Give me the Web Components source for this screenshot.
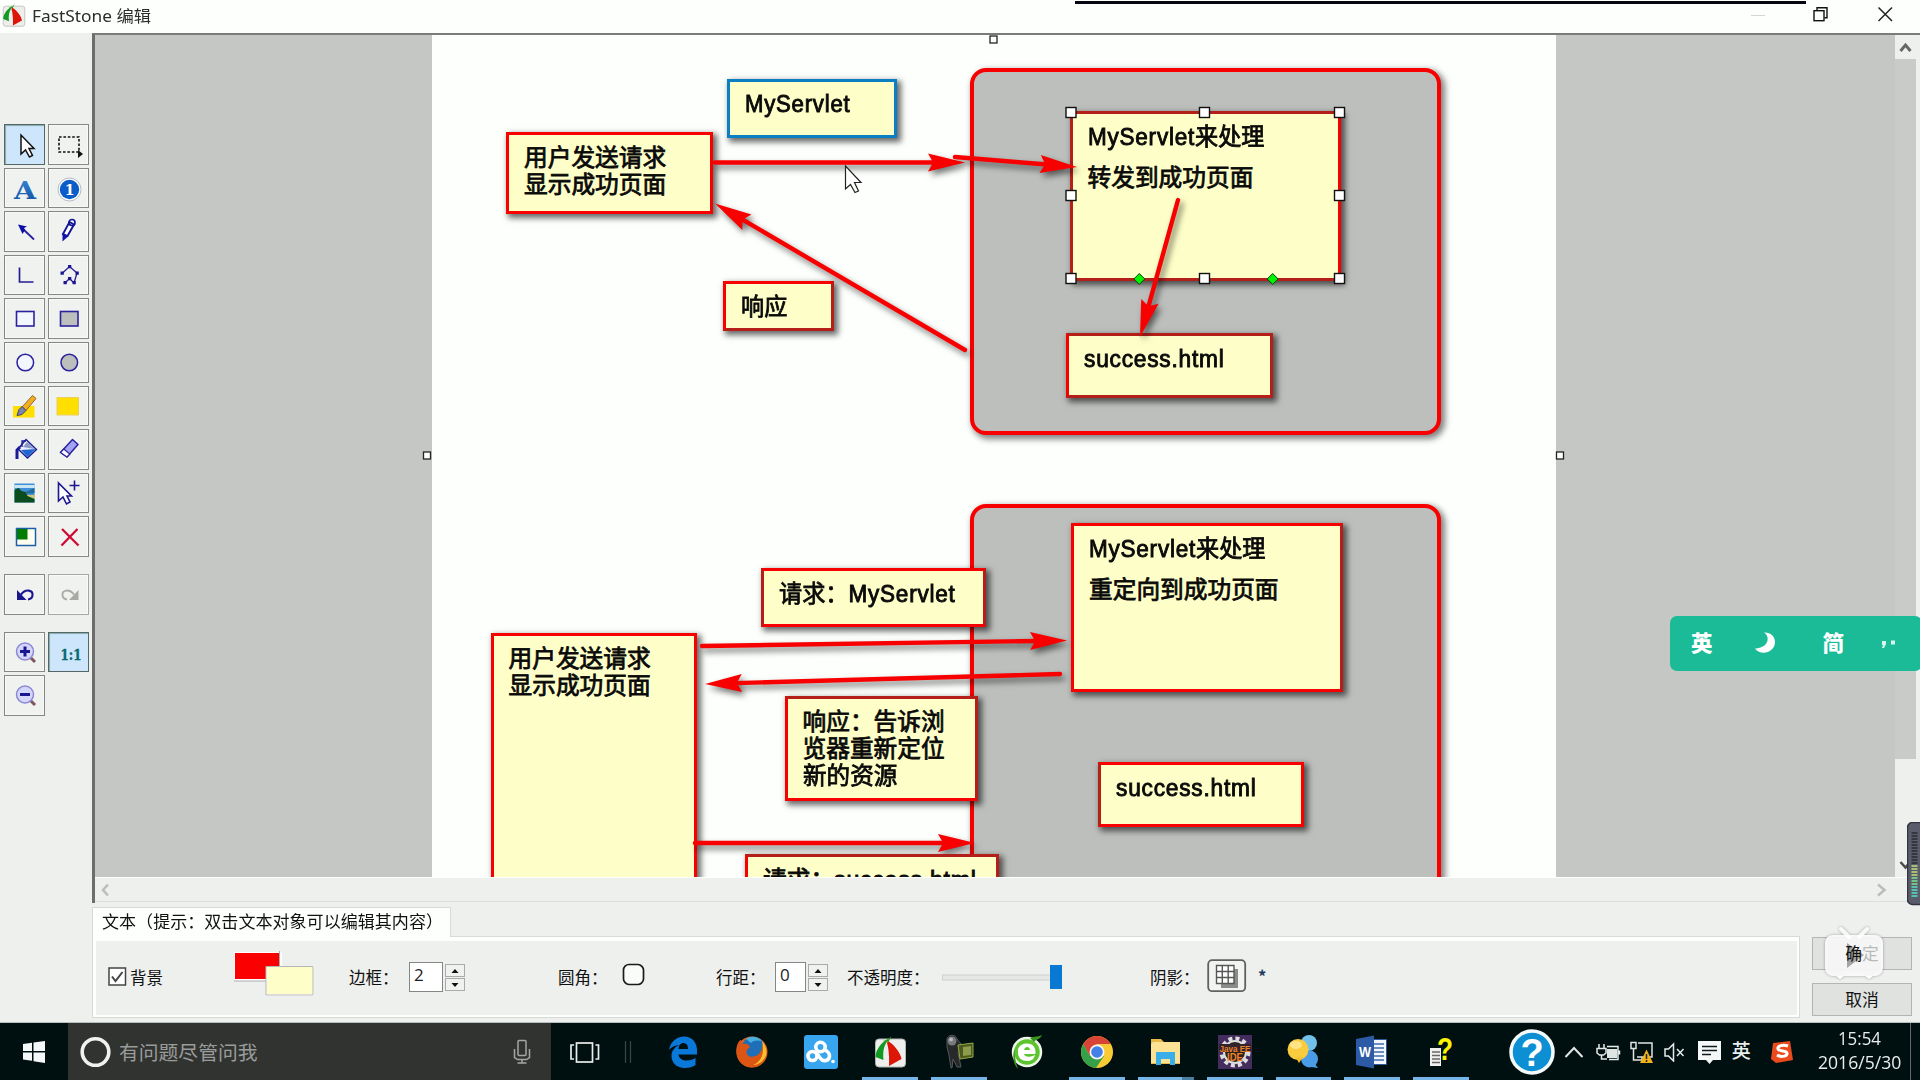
<!DOCTYPE html>
<html lang="zh-CN">
<head>
<meta charset="utf-8">
<title>FastStone 编辑</title>
<style>
html,body{margin:0;width:1920px;height:1080px;overflow:hidden;background:#eef0ee;font-family:"Liberation Sans","Noto Sans CJK SC",sans-serif;color:#111}
</style>
</head>
<body>
<app-shell></app-shell>
<script>
const define=(name,html,init)=>{
  const t=document.createElement('template');
  t.innerHTML=html;
  customElements.define(name,class extends HTMLElement{
    constructor(){super();this.attachShadow({mode:'open'}).appendChild(t.content.cloneNode(true));}
    connectedCallback(){if(init)init(this,this.shadowRoot);}
  });
};

/* Text stretched or squeezed to an exact width */
define('fit-text',`<style>:host{display:inline-block;white-space:nowrap;flex:none}span{display:inline-block;transform-origin:0 50%}</style><span><slot></slot></span>`,(el,r)=>{
  const w=+el.getAttribute('w'),s=r.querySelector('span');
  el.style.width=w+'px';
  const n=s.offsetWidth;
  if(n)s.style.transform=`scaleX(${w/n})`;
});

/* Text note on the diagram */
define('note-box',`<style>
:host{display:block;position:absolute;box-sizing:border-box;border:3px solid #f90000;background:#feffc8;box-shadow:3px 3px 6px 1px rgba(0,0,0,.6);padding-left:15px;font:400 23.7px/27px "Noto Sans CJK SC",sans-serif;-webkit-text-stroke:.8px #0a0a0a;color:#0a0a0a;white-space:nowrap}
::slotted(fit-text){display:block!important;height:var(--lh,27px);line-height:var(--lh,27px)}
</style><slot></slot>`,(el)=>{
  const [x,y,w,h,p]=el.getAttribute('box').split(',');
  Object.assign(el.style,{left:x+'px',top:y+'px',width:w+'px',height:h+'px',paddingTop:p+'px'});
  const d=el.getAttribute('dark')||'';
  for(const [k,s] of [['t','Top'],['r','Right'],['b','Bottom'],['l','Left']]) if(d.includes(k)) el.style['border'+s+'Color']='#b51f1a';
});

/* Rounded server container */
define('server-box',`<style>:host{display:block;position:absolute;box-sizing:border-box;border:4px solid #f90000;border-radius:16px;background:#bdbfbc;box-shadow:3px 3px 6px 1px rgba(0,0,0,.5)}</style>`,(el)=>{
  const [x,y,w,h]=el.getAttribute('box').split(',');
  Object.assign(el.style,{left:x+'px',top:y+'px',width:w+'px',height:h+'px'});
});

/* Arrows from a list of "x1,y1,x2,y2" segments */
define('arrow-layer',`<style>:host{display:block;position:absolute;left:0;top:0}svg{display:block;filter:drop-shadow(3px 4px 3px rgba(0,0,0,.55))}</style><svg width="1920" height="1080"></svg>`,(el,r)=>{
  r.querySelector('svg').innerHTML=el.getAttribute('lines').split(' ').map(s=>{
    const [a,b,c,d]=s.split(',').map(Number),L=Math.hypot(c-a,d-b),g=Math.atan2(d-b,c-a)*180/Math.PI;
    return `<g transform="translate(${a} ${b}) rotate(${g})" fill="#f90000"><path d="M0 0H${L-30}" stroke="#f90000" stroke-width="4.400" stroke-linecap="round"/><path d="M${L} 0L${L-37} 9L${L-33} 2V-2L${L-37} -9Z"/></g>`;
  }).join('');
});

/* Selection handles */
define('pick-handles',`<style>:host{display:block;position:absolute;left:0;top:0}</style><svg width="1920" height="900"></svg>`,(el,r)=>{
  let o='';
  for(const x of [1071,1204.5,1339.5]) for(const y of [112.5,195.5,278.5]) if(!(x===1204.5&&y===195.5)) o+=`<rect x="${x-5}" y="${y-5}" width="10" height="10" fill="#fff" stroke="#111" stroke-width="1.4"/>`;
  for(const x of [1139.3,1272.7]) o+=`<path d="M${x} 273.5l5.5 5.5-5.5 5.5-5.5-5.5z" fill="#00f400" stroke="#0a3a0a"/>`;
  for(const [x,y] of [[427,455.5],[1560,455.5],[993.5,39.5]]) o+=`<rect x="${x-3.5}" y="${y-3.5}" width="7" height="7" fill="#fff" stroke="#222" stroke-width="1.3"/>`;
  r.querySelector('svg').innerHTML=o;
});

define('tool-button',`<style>
:host{display:flex;align-items:center;justify-content:center;box-sizing:border-box;border:1.4px solid #858785;background:#f0f2f0;box-shadow:inset 0 0 0 1px #f8faf8}
:host([on]){background:#cde6fc;border-color:#566;box-shadow:inset 1px 1px 1px #8aa}
:host([off]){border-color:#a5a7a5}
::slotted(svg){display:block;margin:0 0 0 -.5px}
</style><slot></slot>`);

define('tool-bar',`<style>
:host{display:flex;flex-direction:column;box-sizing:border-box;width:92px;padding:91px 0 0 4px;background:#eef0ee}
.g{display:grid;grid-template-columns:41px 41px;grid-auto-rows:40.6px;gap:3px}
.g+.g{margin-top:17px}
</style>
<div class="g">
<tool-button on><svg width="40" height="40"><path d="M16 11v19l4.500-4 4 7 3-1.500-3.500-7H29z" fill="#fff" stroke="#111" stroke-width="1.500"/></svg></tool-button>
<tool-button><svg width="40" height="40"><rect x="10" y="13" width="20" height="15" fill="none" stroke="#111" stroke-width="1.600" stroke-dasharray="2.600 1.800"/><path d="M29 26v8l5-4z" fill="#111"/></svg></tool-button>
<tool-button><svg width="40" height="40"><defs><linearGradient id="a" x2="0" y2="1"><stop offset="0" stop-color="#3a8ad8"/><stop offset="1" stop-color="#0c4f9c"/></linearGradient></defs><text x="20" y="31" text-anchor="middle" font-family="DejaVu Serif,serif" font-weight="700" font-size="25" fill="url(#a)" textLength="22" lengthAdjust="spacingAndGlyphs">A</text></svg></tool-button>
<tool-button><svg width="40" height="40"><circle cx="20.500" cy="21.500" r="11.500" fill="#fff" stroke="#b4b8c4"/><circle cx="20.500" cy="21.500" r="9.700" fill="#0a5cc8"/><text x="20.500" y="26.500" text-anchor="middle" font-family="DejaVu Serif,serif" font-weight="700" font-size="14" fill="#fff">1</text></svg></tool-button>
<tool-button><svg width="40" height="40"><path d="M18 18L29 28.500" stroke="#2a1f9c" stroke-width="1.800"/><path d="M13 13.500l9 2-3 1.500 1 2-2.500 4z" fill="#0d0da8"/></svg></tool-button>
<tool-button><svg width="40" height="40"><path d="M14 23l6.500-12 4.500 2.500L18.500 25z" fill="#fff" stroke="#14149a" stroke-width="1.900"/><path d="M13.500 30.500v-8l5.500 3z" fill="#1212a6"/><circle cx="23" cy="11.500" r="3" fill="none" stroke="#14149a" stroke-width="1.700"/></svg></tool-button>
<tool-button><svg width="40" height="40"><path d="M14.500 12.500v14.500h14" fill="none" stroke="#241d94" stroke-width="1.700"/></svg></tool-button>
<tool-button><svg width="40" height="40"><path d="M13.500 18l7-6.500 7.500 6.500-3 10M16 28l4.500-4.500L25 28" fill="none" stroke="#241d94" stroke-width="1.300"/><g fill="#1c1690"><path d="M11.500 16.500h3.300v3.300h-3.300zM19 10h3.300v3.300H19zM26.500 16.500h3.300v3.300h-3.300zM23.500 26h3.300v3.300h-3.300zM19 22h3.300v3.300H19zM14.500 26h3.300v3.300h-3.300z"/></g></svg></tool-button>
<tool-button><svg width="40" height="40"><rect x="11.500" y="12.500" width="17.500" height="14.500" fill="#f4f6ff" stroke="#2c22a0" stroke-width="1.600"/></svg></tool-button>
<tool-button><svg width="40" height="40"><rect x="11.500" y="12.500" width="17.500" height="14.500" fill="#bdbfbd" stroke="#2c22a0" stroke-width="1.600"/></svg></tool-button>
<tool-button><svg width="40" height="40"><circle cx="20.300" cy="20.500" r="8.300" fill="#f4f6ff" stroke="#2c22a0" stroke-width="1.500"/></svg></tool-button>
<tool-button><svg width="40" height="40"><circle cx="20.300" cy="20.500" r="8.300" fill="#bdbfbd" stroke="#2c22a0" stroke-width="1.500"/></svg></tool-button>
<tool-button><svg width="40" height="40"><rect x="8" y="20" width="21.500" height="11.500" fill="#ffde00"/><path d="M27.500 9.500l3.500 3-10 12-4-3.500z" fill="#f3ae20" stroke="#94682c" stroke-width="1"/><path d="M17 20.500l4 4-4 4-5 1 2-6z" fill="#7985ab" stroke="#3c466c"/></svg></tool-button>
<tool-button><svg width="40" height="40"><rect x="8" y="11.500" width="21.500" height="17.500" fill="#ffdf00" stroke="#e8d060"/></svg></tool-button>
<tool-button><svg width="40" height="40"><path d="M21 10.500l10.500 10-9 8.500L13 20z" fill="#eef" stroke="#1a1a90" stroke-width="1.400"/><path d="M16 21l14.500-1-8 8z" fill="#1f66d0"/><path d="M18 18l4-5 7.500 7z" fill="#8a98c4"/><path d="M17 18v-6h4" fill="none" stroke="#1a1a90" stroke-width="1.300"/><path d="M12 30v-9l3-3" fill="none" stroke="#1b1b98" stroke-width="3"/></svg></tool-button>
<tool-button><svg width="40" height="40"><path d="M23.500 10.500l5.500 5-11 12.500-6.500-4.500z" fill="#a2a4f2" stroke="#2c22a0" stroke-width="1.500" stroke-linejoin="round"/><path d="M14.800 20l6 5-2.800 3-6.500-4.500z" fill="#fff" stroke="#2c22a0" stroke-width="1.200"/></svg></tool-button>
<tool-button><svg width="40" height="40"><rect x="9.500" y="10.500" width="20" height="19" fill="#3f8fd4"/><path d="M9.500 12h20v3h-20z" fill="#c8e6f4"/><path d="M16 21l13.500-6v5z" fill="#236a9a"/><path d="M19 22h10.500v4z" fill="#d6c86a"/><path d="M9.500 17l4-2 3 3 4 1 2 4 7 3v3.500h-20z" fill="#0b4c1e"/></svg></tool-button>
<tool-button><svg width="40" height="40"><path d="M9.500 10v18l4.500-4 3.500 7 3.500-2-3-6h4.500z" fill="#fff" stroke="#1c1690" stroke-width="1.600"/><path d="M25.500 7.500v10M20.500 12.500h10" stroke="#1c1690" stroke-width="1.600"/></svg></tool-button>
<tool-button><svg width="40" height="40"><rect x="11.500" y="11.500" width="19" height="17" fill="#fffff0" stroke="#1c5fa8" stroke-width="1.500"/><rect x="12" y="12" width="10.500" height="10.500" fill="#007d00"/></svg></tool-button>
<tool-button><svg width="40" height="40"><path d="M13 12l16.500 16.500M28.500 12L12.500 28.500" stroke="#d00a34" stroke-width="2.300"/></svg></tool-button>
</div>
<div class="g">
<tool-button><svg width="40" height="40"><path d="M16 20.500c5-6.500 12-4 11.500.5 0 2.500-1.500 4-4.500 4.500" fill="none" stroke="#1a1690" stroke-width="2.100"/><path d="M12 16v10h9.500z" fill="#1a1690"/></svg></tool-button>
<tool-button off><svg width="40" height="40"><path d="M25 20.500c-5-6.500-12-4-11.500.5 0 2.500 1.500 4 4.500 4.500" fill="none" stroke="#aaaca6" stroke-width="1.900"/><path d="M29.500 16v10H20z" fill="#a8aaa4"/></svg></tool-button>
</div>
<div class="g">
<tool-button><svg width="40" height="40"><path d="M25 25l5 5" stroke="#7e5660" stroke-width="3"/><circle cx="20" cy="19.500" r="8.500" fill="#d5d6fb" stroke="#8c88d4" stroke-width="1.500"/><path d="M20 14.500v10M15 19.500h10" stroke="#1a1690" stroke-width="3"/></svg></tool-button>
<tool-button on><svg width="40" height="40"><text x="11.500" y="28" font-family="DejaVu Serif,serif" font-weight="700" font-size="15.500" fill="#0a6a70" stroke="#0a6a70" stroke-width=".4" textLength="21" lengthAdjust="spacingAndGlyphs">1:1</text></svg></tool-button>
<tool-button><svg width="40" height="40"><path d="M25 25l5 5" stroke="#7e5660" stroke-width="3"/><circle cx="20" cy="19.500" r="8.500" fill="#d5d6fb" stroke="#8c88d4" stroke-width="1.500"/><path d="M15 19.500h10" stroke="#1a1690" stroke-width="3"/></svg></tool-button>
</div>`);

define('brand-icon',`<style>:host{display:block}svg{display:block;width:100%;height:100%}</style>
<svg viewBox="0 0 32 32"><rect x="1" y="3" width="30" height="28" rx="3.500" fill="#eeeeec" stroke="#b4b4b2"/><path d="M13 3C5 8 1 15 1 21l8 3C8 14 10 8 14 4z" fill="#149a22"/><path d="M13.500 5c7 4 13 13 13.500 18l-12.500 7C15 20 14 12 12.500 7z" fill="#dc1708"/><path d="M8 5l5-1 4-4-3 6z" fill="#2ca01c"/></svg>`);

define('title-bar',`<style>
:host{display:flex;position:relative;align-items:center;box-sizing:border-box;height:33px;background:#fdfffd;padding-left:2px}
brand-icon{width:24px;height:23px;margin:-2px 6px 0 0}
fit-text{font:16px/24px "Noto Sans","Noto Sans CJK SC",sans-serif;color:#2c2c2c;margin-top:-1px}
.r{margin-left:auto;display:flex;align-items:center;margin-right:27px}
.n{position:absolute;left:1075px;top:1px;width:731px;height:3px;background:#05060f}
.r svg{display:block;margin-top:-4px}
</style>
<brand-icon></brand-icon><fit-text w="119">FastStone 编辑</fit-text>
<div class="r"><svg width="143" height="17"><path d="M1 9.500h14" stroke="#d4d6d4"/><g fill="none" stroke="#111" stroke-width="1.400"><path d="M67 4.500V1.700h10v10H74.500"/><rect x="64" y="4.700" width="10" height="10"/></g><path d="M128.500 1.500L142 15M142 1.500L128.500 15" stroke="#222" stroke-width="1.500"/></svg></div>
<div class="n"></div>`);

define('diagram-canvas',`<style>
:host{display:block;position:relative;overflow:hidden;background:#c5c7c4}
.s{position:absolute;left:-95px;top:-35px;width:1920px;height:1080px}
.page{position:absolute;left:431.5px;top:0;width:1124.500px;height:1080px;background:#fdfffd}
.wide{--lh:41px}
b{font:400 23px/20px "Liberation Sans",sans-serif;-webkit-text-stroke:.9px #0a0a0a;letter-spacing:.8px}
.cur{position:absolute;left:843px;top:163px}
</style>
<div class="s"><div class="page"></div>
<server-box box="970,67.5,471,367"></server-box>
<server-box box="970,504,471,500"></server-box>
<note-box box="506,132,207,81.500,7.500"><fit-text w="142">用户发送请求</fit-text><fit-text w="142">显示成功页面</fit-text></note-box>
<note-box box="726.500,79,170,59,6.500" style="border-color:#0a7fc2"><fit-text w="105"><b>MyServlet</b></fit-text></note-box>
<note-box box="722.500,281,111,50,8" dark="rb"><fit-text w="46">响应</fit-text></note-box>
<note-box class="wide" box="1069.500,110.500,271.500,170.500,1"  dark="tlb"><fit-text w="177"><b>MyServlet</b>来处理</fit-text><fit-text w="166">转发到成功页面</fit-text></note-box>
<note-box box="1065.500,333,207,65,7.500" dark="trb"><fit-text w="141"><b>success.html</b></fit-text></note-box>
<note-box class="wide" box="1071,523,271.500,169,.5" dark="r"><fit-text w="177"><b>MyServlet</b>来处理</fit-text><fit-text w="190">重定向到成功页面</fit-text></note-box>
<note-box box="1098,762,206,64.500,7.500" dark="l"><fit-text w="141"><b>success.html</b></fit-text></note-box>
<note-box box="490.500,632.500,206.500,400,8.500"><fit-text w="142">用户发送请求</fit-text><fit-text w="142">显示成功页面</fit-text></note-box>
<arrow-layer lines="715,162.500,965,162.500 955,157,1077,167 965,350,715,203.500 1178,200,1140,337 702,646,1067,640.500 1060,674,705,684 695,843,975,843"></arrow-layer>
<note-box box="760.500,568,225,58.500,7.500" dark="lr"><fit-text w="177">请求：<b>MyServlet</b></fit-text></note-box>
<note-box box="784.500,696,193,105,7.500" dark="tr"><fit-text w="142">响应：告诉浏</fit-text><fit-text w="142">览器重新定位</fit-text><fit-text w="94.500">新的资源</fit-text></note-box>
<note-box box="745,854,254,70,8" dark="tr"><fit-text w="214">请求：<b>success.html</b></fit-text></note-box>
<pick-handles></pick-handles>
<svg class="cur" width="22" height="32"><path d="M2.500 3v23l5-4.500 4.500 8 3.500-1.500-4-8.500h6.500z" fill="#fff" stroke="#222" stroke-width="1.200"/></svg>
</div>`);

define('edit-area',`<style>
:host{display:grid;grid-template-columns:1800px 1fr;grid-template-rows:842px 25px;box-sizing:border-box;width:1828px;height:870px;border-left:3px solid #6c6e6c;border-top:2.500px solid #7a7c7a}
.v{display:flex;flex-direction:column;align-items:center;background:#eef0ee;padding-right:4px}
.v i{width:21px;height:700px;background:#c9cbc9}
.v svg{display:block}
.h{grid-column:1/3;display:flex;justify-content:space-between;align-items:center;background:#eef0ee;border-top:1px solid #fdfffd;border-bottom:1px solid #dcdedc;padding:0 32px 0 4px}
</style>
<diagram-canvas></diagram-canvas>
<div class="v"><svg width="21" height="24"><path d="M5.500 16l5-6 5 6" fill="none" stroke="#666866" stroke-width="3"/></svg><i></i><svg width="21" height="118"><path d="M5.500 103l5 5.500 5-6" fill="none" stroke="#4a4c4a" stroke-width="2.500"/></svg></div>
<div class="h"><svg width="14" height="14"><path d="M9 1.500L4 7l5 5.500" fill="none" stroke="#bbbdbb" stroke-width="2.500"/></svg><svg width="14" height="14"><path d="M4 1.500L10.500 7 4 12.500" fill="none" stroke="#bbbdbb" stroke-width="2.500"/></svg></div>`);

define('num-spinner',`<style>
:host{display:flex;gap:2px;align-items:center}
.i{box-sizing:border-box;width:var(--w,34px);height:30px;border:1.5px solid #858785;background:#fff;font:17px/24px "Open Sans",sans-serif;padding-left:4px;color:#222}
.b{display:flex;flex-direction:column;gap:1px}
svg{display:block;box-sizing:border-box;border:1px solid #a9aba9;background:#f0f2f0}
</style><div class="i"><slot></slot></div><div class="b"><svg width="20" height="13"><path d="M5.500 8L9 4l3.500 4z" fill="#111"/></svg><svg width="20" height="13"><path d="M5.500 4L9 8l3.500-4z" fill="#111"/></svg></div>`);

define('text-options',`<style>
:host{display:flex;flex-direction:column;width:1708px;font:16.500px/22px "Noto Sans CJK SC",sans-serif;color:#111}
.tab{box-sizing:border-box;align-self:flex-start;width:359px;height:30px;background:#fdfffd;border:1px solid #d8dad8;border-bottom:0;padding:2px 0 0 9px;margin-bottom:-1px;z-index:1}
.p{box-sizing:border-box;height:81.500px;border:1px solid #d8dad8;box-shadow:inset 0 4px #fdfffd,inset 3px 0 #fdfffd,inset 0 -2px #fdfffd,inset -2px 0 #fdfffd;display:flex;align-items:center;padding:1px 0 0 15px}
.p>*{flex:none}
svg{display:block}
</style>
<div class="tab"><fit-text w="341">文本（提示：双击文本对象可以编辑其内容）</fit-text></div>
<div class="p">
<svg width="22" height="20"><rect x="1" y="1" width="16.500" height="17" fill="#fff" stroke="#444" stroke-width="1.500"/><path d="M4 9.500l3.500 4.500 7-9" fill="none" stroke="#444" stroke-width="2"/></svg>
<fit-text w="33">背景</fit-text>
<svg width="82" height="46" style="margin:-8px 0 0 70px"><path d="M1 2h48v29H1z" fill="#fff"/><path d="M2 3h44v26H2z" fill="#fa0000"/><path d="M46.500 1v30H1" fill="none" stroke="#aaa"/><path d="M33 16h48v30H33z" fill="#fff"/><path d="M34 17h46v27H34z" fill="#feffc8"/><path d="M33 45V16.500h47V45z" fill="none" stroke="#b5b7b5"/></svg>
<fit-text w="50" style="margin-left:34px">边框：</fit-text>
<num-spinner style="margin-left:10px">2</num-spinner>
<fit-text w="50" style="margin-left:93px">圆角：</fit-text>
<svg width="25" height="25" style="margin:-3px 0 0 13px"><path d="M8 1.500h9c3 0 5.500 3 5.500 5.500v9c0 3-3 5.500-5.500 5.500H8c-3 0-5.500-3-5.500-5.500V7C2.500 4 5 1.500 8 1.500z" fill="#fafcfa" stroke="#1a1a1a" stroke-width="1.700"/></svg>
<fit-text w="50" style="margin-left:70px">行距：</fit-text>
<num-spinner style="margin-left:9px;--w:31px">0</num-spinner>
<fit-text w="83" style="margin-left:19px">不透明度：</fit-text>
<svg width="122" height="26" style="margin-left:12px"><rect x=".5" y="11" width="118" height="5" fill="#e6e8e6" stroke="#cfd1cf"/><rect x="108" y="1" width="12" height="24" fill="#0878d2"/></svg>
<fit-text w="50" style="margin-left:86px">阴影：</fit-text>
<svg width="40" height="34" style="margin:-2px 0 0 7px"><rect x="1.200" y="1.200" width="37" height="31" rx="4" fill="#f2f4f2" stroke="#5f615f" stroke-width="1.800"/><path d="M14 10h17v19H14z" fill="#8a8c8a"/><path d="M9.500 6.500h17.500v18H9.500zM15.300 6.500v18M21.200 6.500v18M9.500 12.500h17.500M9.500 18.500h17.500" fill="#fff" stroke="#555755" stroke-width="1.400"/></svg>
<fit-text w="8" style="margin:-2px 0 0 11px;font-weight:700;color:#1d3a5c">*</fit-text>
</div>`);

define('push-button',`<style>:host{display:flex;align-items:center;justify-content:center;box-sizing:border-box;width:100px;height:32.500px;border:1.500px solid #b3b5b3;background:#e0e2e0;font:16.800px/22px "Noto Sans CJK SC",sans-serif;color:#111;position:relative}.t{position:relative;z-index:1}</style><slot name="badge"></slot><span class="t"><slot></slot></span>`);

define('tv-badge',`<style>:host{display:block;position:absolute;left:10px;top:-13px}svg{display:block;filter:drop-shadow(0 0 1.500px rgba(0,0,0,.35))}</style>
<svg width="62" height="54"><g fill="#fff" fill-opacity=".9"><rect x="2" y="10" width="58" height="41" rx="8"/></g><path d="M18 4l8 8M44 4l-8 8" stroke="#fff" stroke-opacity=".9" stroke-width="4" stroke-linecap="round"/><path d="M13 51h8l-4 3zM42 51h8l-4 3z" fill="#fff"/><path d="M24 18l17 12-17 13z" fill="#8e908e" fill-opacity=".8"/></svg>`);

define('ime-bar',`<style>:host{display:flex;align-items:center;box-sizing:border-box;position:absolute;left:1670px;top:616px;width:252px;height:55px;border-radius:7px;background:#1bbb98;color:#fff;font:900 21.500px/30px "Noto Sans CJK SC",sans-serif;padding:0 0 4px 21px}svg{display:block}</style>
<span>英</span><svg width="24" height="24" style="margin-left:41px"><path d="M10 2.500C17 7 14 18 1 18.500c6 8 20 4 20-6.500C21 6 16 2 10 2.500z" fill="#fff"/></svg><span style="margin-left:45px">简</span><svg width="20" height="20" style="margin-left:34px"><path d="M4 9h4v3l-2 4H4l1-3H4zM13 8.500h4v4h-4z" fill="#d8f6ec"/></svg>`);

define('level-meter',`<style>:host{display:block;position:absolute;left:1907px;top:822px}</style><svg width="14" height="84"></svg>`,(el,r)=>{
  let o='<rect x=".5" y=".5" width="20" height="82" rx="5" fill="#5b5c6b" stroke="#33343e" stroke-width="1.500"/>';
  for(let i=0;i<22;i++) o+=`<rect x="4.500" y="${10+i*3}" width="6" height="2" fill="${i<11?'#353642':i<15?'#a7bd74':i<18?'#74c284':'#56c2ac'}"/>`;
  r.querySelector('svg').innerHTML=o;
});

define('task-item',`<style>
:host{display:flex;position:relative;flex:none;box-sizing:border-box;width:68.900px;height:57px;align-items:center;justify-content:center}
:host([run])::after{content:"";position:absolute;left:6.500px;right:6.500px;bottom:0;height:3px;background:#76b5e8}
:host([multi])::after{background:linear-gradient(90deg,#76b5e8 78%,#4c7da4 78%)}
</style><slot></slot>`);

define('task-bar',`<style>
:host{display:flex;position:relative;height:57px;background:#001011;color:#e8eeec;align-items:center}
:host>*{flex:none}
svg{display:block}
.start{width:68px;display:flex;justify-content:center}
.search{box-sizing:border-box;width:483px;height:57px;background:#313331;display:flex;align-items:center;padding-left:11px;color:#9a9c9a;font:19.800px/28px "Noto Sans CJK SC",sans-serif}
.apps{display:flex}
.tray{display:flex;align-items:center;margin-left:32px;font:19px/24px "Noto Sans CJK SC",sans-serif}
.clock{display:flex;flex-direction:column;align-items:center;font:18px/24px "Open Sans",sans-serif;margin-left:24px;width:84px}
.end{width:1px;height:57px;background:#667;margin-left:8px}
brand-icon{width:33px;height:32px}
</style>
<div class="start"><svg width="24" height="24"><path d="M1 4l9-1.300V11H1zM11.500 2.500L23 1v10H11.500zM1 12.500h9v8.300L1 19.500zM11.500 12.500H23V23l-11.500-1.700z" fill="#f4f8f8"/></svg></div>
<div class="search"><svg width="34" height="34"><circle cx="16.500" cy="17" r="13.300" fill="none" stroke="#f0f2f0" stroke-width="3.600"/></svg><fit-text w="138" style="margin-left:6px">有问题尽管问我</fit-text><svg width="18" height="26" style="margin-left:256px"><rect x="5" y="1.500" width="8" height="15" rx="1" fill="none" stroke="#a4a6a4" stroke-width="1.500"/><path d="M1.500 10v8.500l3 2h9l3-2V10M9 20.500v3M4.500 24h9" fill="none" stroke="#a4a6a4" stroke-width="1.500"/></svg></div>
<svg width="98" height="32"><g fill="none" stroke="#e8eeec" stroke-width="1.700"><rect x="25.500" y="7" width="16" height="19"/><path d="M23 9h-3v14h3M44.500 9h3v14h-3"/></g><path d="M74.500 5v22M79.500 5v22" stroke="#3a4646" stroke-width="1.200"/></svg>
<div class="apps">
<task-item><svg width="32" height="34"><path d="M2 15C4 4 13 1 18 1.500c8 .5 12 7 12 14v4H11.500c.5 4 4 6 8.500 6 3.500 0 6-1 8.500-2.500v7C26 32 22 33 18 33 9.500 33 4.500 27.500 4.500 21c0-5 3-9 8-11-6 .5-9 3-10.500 5zm9.500-1H21c0-4-1.500-6-4.500-6s-4.700 2.500-5 6z" fill="#0a78d8"/></svg></task-item>
<task-item><svg width="34" height="34"><circle cx="17" cy="17" r="15.500" fill="#e8661a"/><circle cx="18" cy="13.500" r="11.500" fill="#1e6fb8"/><path d="M11 4c5-4 13-2 16 2-4-1-9-1-11 2z" fill="#48b0e0"/><path d="M3 8c1-2 2-3 3-3l2 4c4-1 6 1 7 3l-3 3c-2 5 3 8 8 6 5-1 7-6 7-11 5 5 6 12 1 17-6 7-16 7-22 1C1 23 0 14 3 8z" fill="#dc5514"/><path d="M27 6c5 6 6 13 2 18-3 4-7 6-11 6 8-3 12-11 9-24z" fill="#f8c02c"/></svg></task-item>
<task-item><svg width="34" height="34"><rect width="34" height="34" rx="3" fill="#38a6ee"/><g fill="none" stroke="#fff" stroke-width="3.600"><circle cx="16.500" cy="12" r="4.700"/><circle cx="8.500" cy="21" r="4.500"/><path d="M20 14.500c0 0 5.500 2 5.500 6.500 0 5-6.500 6-9 2.500L12.500 18"/></g><circle cx="29" cy="26.500" r="1.800" fill="#fff"/></svg></task-item>
<task-item run><brand-icon></brand-icon></task-item>
<task-item run><svg width="32" height="36"><path d="M4 5c1-5 9-5 10 0l4 5-1 5-2 4 3 14h-4l-4-8-1 9H8L6 21 4 13z" fill="#26282a" stroke="#55585a"/><circle cx="9" cy="7" r="4.500" fill="#77797c"/><circle cx="8" cy="5.500" r="2" fill="#b5b7ba"/><path d="M15 11l15-2v14l-13 2z" fill="#4c591e" stroke="#93a845"/><path d="M20 13l8-1v9l-8 1z" fill="#8c9c4c"/></svg></task-item>
<task-item><svg width="36" height="36"><circle cx="17" cy="18" r="14" fill="#5cc42e" stroke="#eef6ea" stroke-width="2.500"/><path d="M8 19C7 12 12 9.500 17 9.500c6 0 9 4 8.500 10.500H14c1 3.500 6 3.500 11 1-1 4.500-4 6-8 6-5 0-9-3-9-8zm6-3h6c-.5-4-5-4-6 0z" fill="#fff"/><path d="M20 4c5-2 9-1 12-3-2 5-6 4-8 7M5 14c-1 7 1 15 3 21-5-5-6-14-3-21z" fill="#38961a"/></svg></task-item>
<task-item run><svg width="34" height="34" viewBox="-17 -17 34 34"><circle r="16" fill="#f8cb35"/><path d="M-13.800-8A16 16 0 0 1 13.800-8H0L-7 4z" fill="#d94436"/><path d="M-13.800-8A16 16 0 0 0-1 16L7 4H-7z" fill="#35a048"/><circle r="7.500" fill="#f4f6f4"/><circle r="5.800" fill="#4381e6"/></svg></task-item>
<task-item run multi><svg width="34" height="34"><path d="M2 4h10l3 3h16v22H2z" fill="#e8b94a"/><path d="M4 7h27v21H2V9z" fill="#fbe294"/><path d="M7 17h19v13h-5v-6h-9v6H7z" fill="#39aee8"/></svg></task-item>
<task-item run><svg width="34" height="34"><rect width="34" height="34" fill="#452c5e"/><circle cx="17" cy="17" r="13.500" fill="none" stroke="#ddd" stroke-width="4" stroke-dasharray="4 3.070"/><circle cx="17" cy="17" r="11" fill="#28231f" stroke="#ddd" stroke-width="2"/><path d="M1 9h32v8H1z" fill="#33242b"/><text x="1.500" y="16.500" font-family="Liberation Sans" font-weight="700" font-size="9.500" fill="#ef8128" textLength="31" lengthAdjust="spacingAndGlyphs">Java EE</text><text x="9" y="25.500" font-family="Liberation Sans" font-weight="700" font-size="10" fill="#ef8128" textLength="16" lengthAdjust="spacingAndGlyphs">IDE</text></svg></task-item>
<task-item run><svg width="36" height="34"><circle cx="24" cy="8" r="8" fill="#71c1ea"/><circle cx="24.500" cy="24" r="8.500" fill="#4b9ce6"/><path d="M30 29l3 4-7-1z" fill="#4b9ce6"/><circle cx="13" cy="14.500" r="10.500" fill="#f9cc3d"/><path d="M11 23l3 5 4-6z" fill="#f3bd2c"/><ellipse cx="11" cy="10" rx="6" ry="4" fill="#ffe385"/></svg></task-item>
<task-item run><svg width="34" height="34"><path d="M16 4.500h15.500v25H16z" fill="#f4f8fc" stroke="#2b579a"/><path d="M19 9h10M19 13h10M19 17h10M19 21h10M19 25h10" stroke="#3c6ab0" stroke-width="1.600"/><path d="M1 4l18-3.500v33L1 30z" fill="#2c5aa4"/><text x="4" y="22" font-family="Liberation Sans" font-weight="700" font-size="14" fill="#fff" textLength="12" lengthAdjust="spacingAndGlyphs">W</text></svg></task-item>
<task-item run><svg width="26" height="34"><path d="M2 13h11v18H2z" fill="#f0f0ee"/><path d="M4 17h8M4 20.500h8M4 24h8M4 27.500h8" stroke="#666" stroke-width="1.400"/><text x="9" y="25" font-family="Liberation Sans" font-weight="700" font-size="32" fill="#fdf400" textLength="16" lengthAdjust="spacingAndGlyphs">?</text></svg></task-item>
</div>
<div class="tray">
<svg width="48" height="48"><circle cx="24" cy="24" r="21" fill="#0d8fd4" stroke="#f4fafa" stroke-width="3.500"/><text x="24" y="37.500" text-anchor="middle" font-family="Liberation Sans" font-weight="700" font-size="38" fill="#fff">?</text></svg>
<svg width="20" height="16" style="margin-left:8px"><path d="M1.500 13L10 4l8.500 9" fill="none" stroke="#e0e6e4" stroke-width="2"/></svg>
<svg width="26" height="22" style="margin-left:11px"><path d="M4 3v4M9 3v4M2 7.500h9V12l-2.500 2h-4L2 12zM6.500 14v4H12" fill="none" stroke="#e4eae8" stroke-width="1.500"/><rect x="12" y="8" width="10" height="9" fill="#dfe5e3"/><path d="M12 5.500h11v13h-9M24.500 9.500v4" fill="none" stroke="#e4eae8" stroke-width="1.500"/></svg>
<svg width="26" height="24" style="margin-left:8px"><path d="M2 2.500h5v6H2zM9 3h14v14H8M4.500 9v11h8M13 17v4" fill="none" stroke="#dfe5e3" stroke-width="1.500"/><path d="M17.500 9.500L24 23H11z" fill="#f3b21c"/><path d="M17.500 14v5M17.500 20v2" stroke="#222" stroke-width="1.500"/></svg>
<svg width="24" height="20" style="margin-left:8px"><path d="M2 7h3.500l5-5v17l-5-5H2zM14 7l6.500 7M20.500 7L14 14" fill="none" stroke="#e4eae8" stroke-width="1.500"/></svg>
<svg width="26" height="26" style="margin-left:9px"><path d="M2 2h23v19h-8l-3.500 4-3.500-4H2z" fill="#f4f8f8"/><path d="M6 7.500h15M6 11.500h15M6 15.500h9" stroke="#0c1a1a" stroke-width="1.500"/></svg>
<span style="margin:-3px 0 0 10px;font-weight:500">英</span>
<svg width="24" height="26" style="margin-left:19px"><path d="M3 4l17-2 3 19-17 3-5-4z" fill="#ea4a1c"/><path d="M18 7c-5-2-11 0-10 3 1 3 10 1 9 5-1 3-7 3-10 1" fill="none" stroke="#fff" stroke-width="3"/></svg>
</div>
<div class="clock" style="margin-top:-4px"><fit-text w="43">15:54</fit-text><fit-text w="83">2016/5/30</fit-text></div>
<div class="end"></div>`);

define('app-shell',`<style>
:host{display:flex;flex-direction:column;width:1920px;height:1080px;background:#eef0ee;position:relative;overflow:hidden}
.mid{display:flex;height:870px}
tool-bar{flex:none}
edit-area{flex:none}
.bot{display:flex;box-sizing:border-box;height:120px;padding:4px 0 0 92px;border-bottom:1px solid #b5bfbf;flex:none}
.btns{display:flex;flex-direction:column;gap:13.500px;margin:30px 0 0 12px}
task-bar{flex:none}
</style>
<title-bar></title-bar>
<div class="mid"><tool-bar></tool-bar><edit-area></edit-area></div>
<div class="bot"><text-options></text-options><div class="btns"><push-button><tv-badge slot="badge"></tv-badge>确<span style="color:#b8bab8">定</span></push-button><push-button>取消</push-button></div></div>
<task-bar></task-bar>
<ime-bar></ime-bar><level-meter></level-meter>`);
</script>
</body>
</html>
